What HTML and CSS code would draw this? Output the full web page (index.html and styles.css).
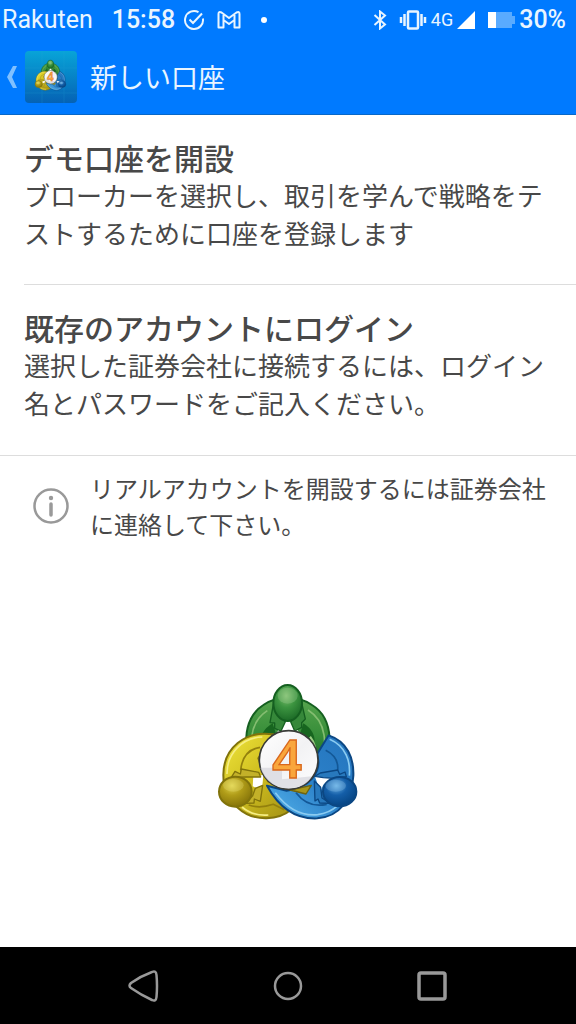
FILE: index.html
```html
<!DOCTYPE html>
<html lang="ja">
<head>
<meta charset="utf-8">
<meta name="viewport" content="width=device-width, initial-scale=1">
<title>新しい口座</title>
<link rel="stylesheet" href="styles.css">
</head>
<body>
<svg class="defs" aria-hidden="true">
  <defs>
    <linearGradient id="green" x1="0" y1="0" x2="0" y2="1"><stop offset="0" stop-color="#58a64e"/><stop offset=".5" stop-color="#358c38"/><stop offset="1" stop-color="#14591d"/></linearGradient>
    <linearGradient id="yellow" x1="0" y1="0" x2="1" y2="1"><stop offset="0" stop-color="#f0e63c"/><stop offset=".45" stop-color="#d0bf20"/><stop offset="1" stop-color="#9c8a12"/></linearGradient>
    <linearGradient id="blue" x1="1" y1="0" x2="0" y2="1"><stop offset="0" stop-color="#2474bd"/><stop offset=".5" stop-color="#2b80c8"/><stop offset="1" stop-color="#55b4ec"/></linearGradient>
    <radialGradient id="green-head" cx=".45" cy=".3" r=".65"><stop offset="0" stop-color="#80c070"/><stop offset=".5" stop-color="#3c9440"/><stop offset="1" stop-color="#20702a"/></radialGradient>
    <radialGradient id="yellow-head" cx=".4" cy=".3" r=".65"><stop offset="0" stop-color="#e0d44c"/><stop offset=".5" stop-color="#b09c18"/><stop offset="1" stop-color="#8c7a0c"/></radialGradient>
    <radialGradient id="blue-head" cx=".4" cy=".3" r=".65"><stop offset="0" stop-color="#68b0e4"/><stop offset=".5" stop-color="#145ea8"/><stop offset="1" stop-color="#084888"/></radialGradient>
    <linearGradient id="disc" x1="0" y1="0" x2="1" y2="1"><stop offset="0" stop-color="#fff"/><stop offset=".5" stop-color="#f2f2f4"/><stop offset="1" stop-color="#fff"/></linearGradient>
    <linearGradient id="tile" x1="0" y1="0" x2="0" y2="1"><stop offset="0" stop-color="#08a4d8"/><stop offset="1" stop-color="#0562b4"/></linearGradient>
    <symbol id="trio" viewBox="0 0 468 468">
      <g stroke-linejoin="round">
        <path d="M150 300C92 240 95 130 160 90Q190 68 233 68T306 90C372 130 375 240 322 300Z" fill="url(#green)" stroke="#155f20" stroke-width="6"/>
        <path d="M145 268C112 215 118 142 172 107M294 105C350 140 356 215 324 265" fill="none" stroke="#84bd70" stroke-width="5"/>
        <path d="M153 215Q145 170 188 145L202 190ZM313 215Q321 170 280 145L266 190Z" fill="#17651f"/>
        <path d="M300 185Q325 215 310 255" fill="none" stroke="#9bcc82" stroke-width="7"/>
        <path d="M202 170H266L250 140H216Z" fill="#fff"/>
        <path d="M190 88L180 143L194 144V160L213 168L226 140L204 120ZM276 88L286 132L275 143V157L254 168L242 140L264 120Z" fill="#36883a" stroke="#155f20" stroke-width="4"/>
        <path d="M190 178C105 165 40 220 40 300C40 380 105 432 170 430Q215 428 242 405L280 354L175 320L145 250Z" fill="url(#yellow)" stroke="#81730b" stroke-width="6"/>
        <path d="M157 186C94 188 50 238 51 297M96 396Q128 424 175 420" fill="none" stroke="#f6ee84" stroke-width="5"/>
        <path d="M92 286Q98 225 150 217M116 390Q148 402 190 388L223 404" fill="none" stroke="#93800d" stroke-width="5"/>
        <path d="M130 304L160 300L156 345L128 334Z" fill="#fff"/>
        <path d="M64 307L75 289L91 297L94 282L146 292L152 306L110 306ZM106 385L132 384L133 372L151 379L158 331L136 340L128 362Z" fill="#c3b129" stroke="#81730b" stroke-width="4"/>
        <path d="M356 181C412 199 432 250 430 302C426 373 390 425 322 430C255 433 206 396 171 332L230 347C294 340 339 294 321 238Z" fill="url(#blue)" stroke="#0b4783" stroke-width="6"/>
        <path d="M240 345L288 357L304 331Z" fill="#a8961a" stroke="#6f640f" stroke-width="4"/>
        <path d="M359 193C408 214 422 260 418 302M196 353C235 405 281 423 323 419Q357 415 383 392" fill="none" stroke="#8acbf1" stroke-width="5"/>
        <path d="M347 226Q387 246 383 286M258 353Q294 400 350 388" fill="none" stroke="#135897" stroke-width="5"/>
        <path d="M315 305L373 304L340 329L331 350Z" fill="#fff"/>
        <path d="M314 304L331 294L383 285L389 298L405 291L409 305L370 310L340 308ZM313 318L332 337L336 369L362 385L329 384L324 372L315 378Z" fill="#2879bd" stroke="#0b4783" stroke-width="4"/>
      </g>
      <ellipse cx="233" cy="84" rx="43" ry="54" fill="url(#green-head)" stroke="#155f20" stroke-width="6"/>
      <ellipse cx="233" cy="62" rx="30" ry="24" fill="#b9dda7" opacity=".25"/>
      <ellipse cx="76" cy="350" rx="49" ry="45" fill="url(#yellow-head)" stroke="#81730b" stroke-width="6"/>
      <ellipse cx="70" cy="331" rx="31" ry="19" fill="#f4eb8d" opacity=".25"/>
      <ellipse cx="389" cy="350" rx="50" ry="44" fill="url(#blue-head)" stroke="#0b4783" stroke-width="6"/>
      <ellipse cx="377" cy="332" rx="31" ry="18" fill="#a6d7f6" opacity=".25"/>
      <circle cx="236" cy="255" r="88" fill="url(#disc)" stroke="#393b38" stroke-width="5"/>
      <path d="M151 278H216V313L306 304Q285 340 236 340Q172 338 151 278Z" fill="#d8d8df" opacity=".75"/>
      <text x="231" y="308" text-anchor="middle" font-family="Noto Sans, sans-serif" font-size="158" font-weight="600" fill="#f9a63c" stroke="#d9671c" stroke-width="4">4</text>
    </symbol>
  </defs>
</svg>
<div class="screen">
  <header class="header">
    <div class="status">
      <div class="status-group">
        <span class="carrier">Rakuten</span>
        <time class="clock">15:58</time>
        <svg class="ic-check" width="22" height="22" viewBox="0 0 22 22"><path d="M15.500 3.200A9 9 0 1 0 19.900 9.500M6.500 10.500L10 14L19 4.500" fill="none" stroke="currentColor" stroke-width="2"/></svg>
        <svg class="ic-mail" width="24" height="18" viewBox="0 0 24 18"><path d="M1.500 16.500V3Q1.500 0 4.500 1.500L12 7L19.500 1.500Q22.500 0 22.500 3V16.500H17.500V9L12 13L6.500 9V16.500ZM6.500 9V4M17.500 9V4" fill="none" stroke="currentColor" stroke-width="2" stroke-linejoin="round"/></svg>
        <i class="dot"></i>
      </div>
      <div class="status-group">
        <svg class="ic-bt" width="14" height="20" viewBox="0 0 14 20"><path d="M1.500 5L12 14.500L7 18.500V1.500L12 5.500L1.500 15" fill="none" stroke="currentColor" stroke-width="2"/></svg>
        <svg class="ic-vibrate" width="28" height="20" viewBox="0 0 28 20"><rect x="9" y="1.500" width="10" height="17" rx="1" fill="none" stroke="currentColor" stroke-width="2.500"/><path d="M5.500 4V16M2 7V13M22.500 4V16M26 7V13" stroke="currentColor" stroke-width="2.500"/></svg>
        <span class="network">4G</span>
        <svg class="ic-signal" width="18" height="18" viewBox="0 0 18 18"><path d="M18 0V18H0Z" fill="currentColor"/></svg>
        <svg class="ic-battery" width="27" height="16" viewBox="0 0 27 16"><path d="M0 0H24V4H27V12H24V16H0Z" fill="#5aabff"/><path d="M0 0H8V16H0Z" fill="currentColor"/></svg>
        <span class="percent">30%</span>
      </div>
    </div>
    <div class="appbar">
      <button class="back" type="button" aria-label="戻る">
        <svg width="12" height="24" viewBox="0 0 12 24"><path d="M7 1H11L6 12L11 23H7L1 12Z" fill="#80c0ff"/></svg>
        <svg width="52" height="52" viewBox="0 0 52 52"><rect width="52" height="52" rx="4" fill="url(#tile)"/><path d="M0 17H52M0 42H52M17 0V52M39 0V52" stroke="#26a7d6" opacity=".2"/><use href="#trio" x="8" y="7" width="35" height="35"/></svg>
      </button>
      <h1 class="title">新しい口座</h1>
    </div>
  </header>
  <main class="content">
    <a class="option option-inset" href="#demo">
      <strong class="option-title">デモ口座を開設</strong>
      <span class="option-text">ブローカーを選択し、取引を学んで戦略をテ<wbr>ストするために口座を登録します</span>
    </a>
    <a class="option" href="#login">
      <strong class="option-title">既存のアカウントにログイン</strong>
      <span class="option-text">選択した証券会社に接続するには、ログイン<wbr>名とパスワードをご記入ください。</span>
    </a>
    <div class="info">
      <svg class="info-icon" width="36" height="36" viewBox="0 0 36 36"><circle cx="18" cy="18" r="16.500" fill="none" stroke="#999" stroke-width="2.500"/><path d="M18 16V27" stroke="#999" stroke-width="3.500" stroke-linecap="round"/><circle cx="18" cy="10" r="2.200" fill="#999"/></svg>
      <p class="info-text">リアルアカウントを開設するには証券会社に連絡して下さい。</p>
    </div>
    <div class="brand"><svg width="156" height="156" role="img" aria-label="MetaTrader 4"><use href="#trio"/></svg></div>
  </main>
  <nav class="nav">
    <button type="button" aria-label="戻る"><svg width="32" height="32" viewBox="0 0 32 32"><path d="M24 2Q28 0 28.500 5Q29.500 16 28.500 27Q28 32 24 30Q13 25 3 18Q0 16 3 13Q13 6 24 2Z" fill="none" stroke="#999" stroke-width="2.500"/></svg></button>
    <button type="button" aria-label="ホーム"><svg width="32" height="32" viewBox="0 0 32 32"><circle cx="16" cy="16" r="13" fill="none" stroke="#999" stroke-width="2.500"/></svg></button>
    <button type="button" aria-label="履歴"><svg width="32" height="32" viewBox="0 0 32 32"><rect x="3" y="3" width="26" height="26" rx="2" fill="none" stroke="#999" stroke-width="3.500"/></svg></button>
  </nav>
</div>
</body>
</html>
```
FILE: styles.css
```css
* { box-sizing: border-box; }
body {
  margin: 0;
  background: #fff;
  color: #484848;
  font-family: "Noto Sans CJK JP", sans-serif;
}
svg { display: block; flex: none; }
.defs { position: absolute; width: 0; height: 0; }
button { border: 0; padding: 0; background: none; cursor: pointer; }
.screen { display: flex; flex-direction: column; min-height: 100vh; }

.header { background: #007aff; color: #e9f5ff; border-bottom: 1px solid #0868c8; }
.status {
  display: flex;
  justify-content: space-between;
  height: 40px;
  padding: 0 10px 0 2px;
  font: 25px/40px Roboto, sans-serif;
}
.status-group { display: flex; align-items: center; }
.clock { margin-left: 19px; font-weight: 500; }
.ic-check { margin-left: 8px; }
.ic-mail { margin-left: 12px; }
.dot { width: 6px; height: 6px; margin-left: 20px; border-radius: 50%; background: #fff; }
.ic-vibrate { margin-left: 12px; }
.network { margin-left: 4px; font-size: 18px; }
.ic-signal { margin-left: 4px; color: #fff; }
.ic-battery { margin-left: 13px; color: #fff; }
.percent { margin-left: 4px; font-weight: 500; }

.appbar { display: flex; align-items: center; gap: 13px; height: 74px; padding: 0 6px; }
.back { display: flex; align-items: center; gap: 7px; }
.title { margin: 0; font-size: 27px; font-weight: 400; line-height: 40px; }

.content { display: flex; flex: 1; flex-direction: column; }
.option {
  display: block;
  padding: 23px 24px 33px;
  border-bottom: 1px solid #ddd;
  color: inherit;
  line-height: 38px;
  text-decoration: none;
}
.option-inset { margin-left: 24px; padding: 23px 24px 32px 0; }
.option-title { display: block; font-size: 30px; font-weight: 500; }
.option-text { display: block; font-size: 26px; }

.info { display: flex; align-items: center; gap: 21px; padding: 14px 24px 8px 33px; }
.info-text { margin: 0; font-size: 24px; line-height: 36px; }
.brand { display: flex; flex: 1; align-items: center; justify-content: center; padding-top: 8px; }

.nav {
  display: flex;
  align-items: center;
  justify-content: center;
  gap: 112px;
  height: 77px;
  background: #000;
}
```
